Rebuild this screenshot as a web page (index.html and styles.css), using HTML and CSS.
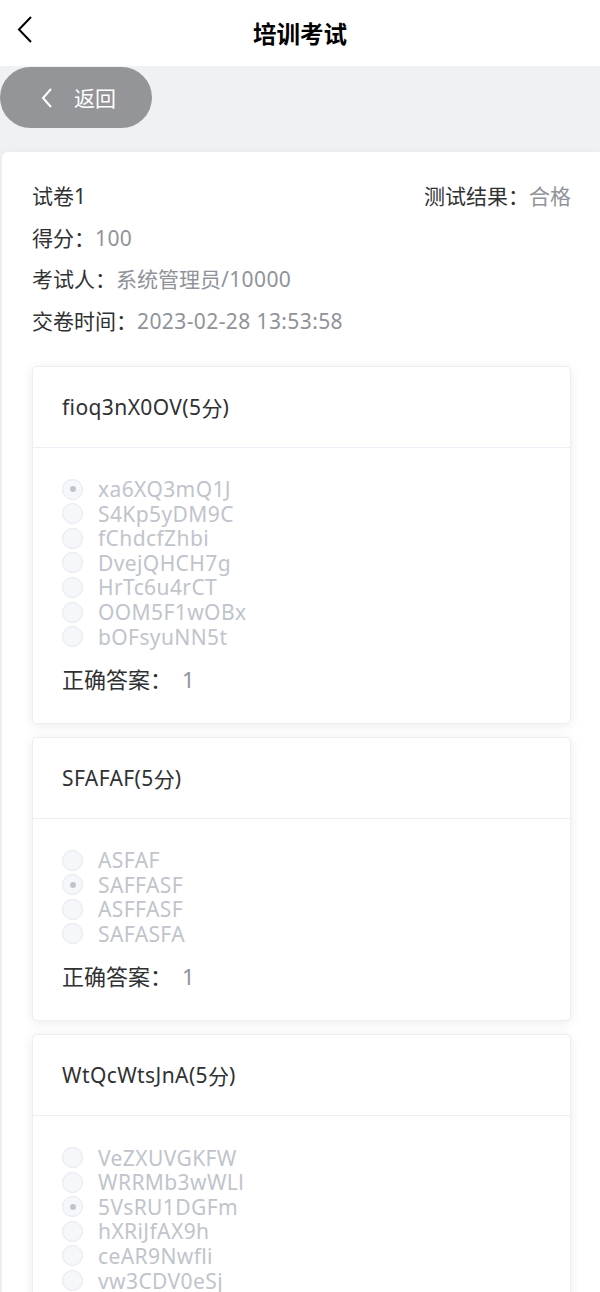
FILE: index.html
```html
<!DOCTYPE html>
<html lang="zh">
<head>
<meta charset="utf-8">
<title>培训考试</title>
<link rel="stylesheet" href="styles.css">
</head>
<body>
<header class="nav">
  <svg class="nav-back" width="20" height="30" viewBox="0 0 20 30"><path d="M15 2 L3 14.5 L15 27" fill="none" stroke="#000" stroke-width="2"/></svg>
  <div class="nav-title">培训考试</div>
</header>
<div class="toolbar">
  <button class="back-btn">
    <svg width="14" height="22" viewBox="0 0 14 22"><path d="M11 2 L3 11 L11 20" fill="none" stroke="#fff" stroke-width="2"/></svg>
    <span>返回</span>
  </button>
</div>
<main class="sheet">
  <div class="info-row split">
    <span class="label">试卷<span class="lat">1</span></span>
    <span><span class="label">测试结果：</span><span class="val">合格</span></span>
  </div>
  <div class="info-row"><span class="label">得分：</span><span class="val lat">100</span></div>
  <div class="info-row"><span class="label">考试人：</span><span class="val">系统管理员<span class="lat">/10000</span></span></div>
  <div class="info-row"><span class="label">交卷时间：</span><span class="val lat">2023-02-28 13:53:58</span></div>

  <section class="q-card">
    <div class="q-head"><span class="lat">fioq3nX0OV(5</span>分<span class="lat">)</span></div>
    <div class="q-body">
      <div class="opt"><span class="radio on"></span>xa6XQ3mQ1J</div>
      <div class="opt"><span class="radio"></span>S4Kp5yDM9C</div>
      <div class="opt"><span class="radio"></span>fChdcfZhbi</div>
      <div class="opt"><span class="radio"></span>DvejQHCH7g</div>
      <div class="opt"><span class="radio"></span>HrTc6u4rCT</div>
      <div class="opt"><span class="radio"></span>OOM5F1wOBx</div>
      <div class="opt"><span class="radio"></span>bOFsyuNN5t</div>
      <div class="answer"><span class="label">正确答案：</span><span class="val ans">1</span></div>
    </div>
  </section>

  <section class="q-card">
    <div class="q-head"><span class="lat">SFAFAF(5</span>分<span class="lat">)</span></div>
    <div class="q-body">
      <div class="opt"><span class="radio"></span>ASFAF</div>
      <div class="opt"><span class="radio on"></span>SAFFASF</div>
      <div class="opt"><span class="radio"></span>ASFFASF</div>
      <div class="opt"><span class="radio"></span>SAFASFA</div>
      <div class="answer"><span class="label">正确答案：</span><span class="val ans">1</span></div>
    </div>
  </section>

  <section class="q-card">
    <div class="q-head"><span class="lat">WtQcWtsJnA(5</span>分<span class="lat">)</span></div>
    <div class="q-body">
      <div class="opt"><span class="radio"></span>VeZXUVGKFW</div>
      <div class="opt"><span class="radio"></span>WRRMb3wWLl</div>
      <div class="opt"><span class="radio on"></span>5VsRU1DGFm</div>
      <div class="opt"><span class="radio"></span>hXRiJfAX9h</div>
      <div class="opt"><span class="radio"></span>ceAR9Nwfli</div>
      <div class="opt"><span class="radio"></span>vw3CDV0eSj</div>
      <div class="answer"><span class="label">正确答案：</span><span class="val ans">1</span></div>
    </div>
  </section>
</main>
</body>
</html>
```
FILE: styles.css
```css
* { box-sizing: border-box; }
html, body { margin: 0; padding: 0; }
body {
  background: #f0f1f5;
  font-family: "Noto Sans", "Noto Sans CJK SC", sans-serif;
  color: #303133;
  overflow: hidden;
  height: 1292px;
}
.lat { letter-spacing: 0.4px; }
.nav {
  height: 66px;
  background: #fff;
  display: flex;
  align-items: center;
  justify-content: center;
  position: relative;
}
.nav-back {
  position: absolute;
  left: 16px;
  top: 15px;
}
.nav-title {
  font-size: 23.5px;
  font-weight: 700;
  color: #000;
  font-family: "Noto Sans CJK SC", sans-serif;
}
.toolbar {
  padding-top: 1px;
  height: 86px;
}
.back-btn {
  width: 152px;
  height: 61px;
  border: none;
  border-radius: 31px;
  background: #939599;
  color: #fff;
  display: flex;
  align-items: center;
  padding: 0 0 0 40px;
  gap: 20px;
  font-family: "Noto Sans CJK SC", sans-serif;
  font-size: 21px;
}
.back-btn span { line-height: 1; }
.sheet {
  margin-left: 2px;
  background: #fff;
  border-radius: 6px 0 0 0;
  min-height: 1200px;
  padding: 24px 29px 0 30px;
  box-shadow: 0 0 10px rgba(0,0,0,0.04);
}
.info-row {
  font-size: 21px;
  line-height: 41.7px;
  height: 41.7px;
}
.info-row.split {
  display: flex;
  justify-content: space-between;
}
.label { color: #303133; }
.val { color: #909399; }
.q-card {
  background: #fff;
  border: 1px solid #ebeef5;
  border-radius: 5px;
  box-shadow: 0 2px 12px rgba(0,0,0,0.08);
  overflow: hidden;
  margin-top: 23px;
  margin-bottom: 13px;
}
.q-card + .q-card { margin-top: 0; }
.q-head {
  height: 81px;
  padding: 0 29px;
  display: flex;
  align-items: center;
  font-size: 21px;
  border-bottom: 1px solid #ebeef5;
}
.q-body {
  padding: 29px 29px 29px 29px;
}
.opt {
  display: flex;
  align-items: center;
  height: 24.6px;
  font-size: 21px;
  line-height: 24px;
  letter-spacing: 0.4px;
  color: #c0c4cc;
}
.radio {
  width: 21px;
  height: 21px;
  border-radius: 50%;
  border: 1px solid #e4e7ed;
  background: #f5f7fa;
  margin-right: 15px;
  display: flex;
  align-items: center;
  justify-content: center;
  flex: none;
}
.radio.on::after {
  content: "";
  width: 6px;
  height: 6px;
  border-radius: 50%;
  background: #c0c4cc;
}
.answer {
  margin-top: 15px;
  font-size: 22px;
  line-height: 30px;
}
.ans { margin-left: 10px; }
```
